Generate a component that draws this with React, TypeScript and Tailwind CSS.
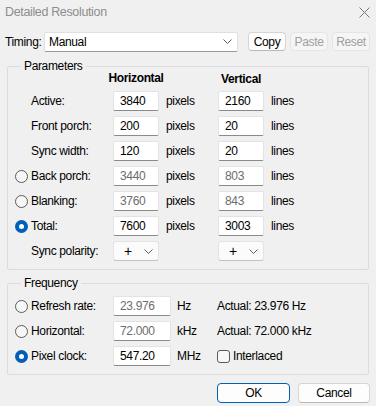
import React from 'react'

const font = { fontFamily: '"Liberation Sans", Arial, sans-serif' }

function Chevron() {
  return (
    <svg width="9" height="5" viewBox="0 0 9 5" className="shrink-0">
      <path d="M0.5 0.5 L4.5 4.5 L8.5 0.5" fill="none" stroke="#5f5f5f" strokeWidth="1" />
    </svg>
  )
}

function Radio({ checked }: { checked?: boolean }) {
  if (checked) {
    return (
      <span className="w-[13px] h-[13px] rounded-full bg-[#005fb8] flex items-center justify-center">
        <span className="w-[5px] h-[5px] rounded-full bg-white" />
      </span>
    )
  }
  return <span className="w-[13px] h-[13px] rounded-full border border-[#5b5b5b] bg-[#f7f7f7]" />
}

function Field({ value, disabled, w = 'w-[46px]' }: { value: string; disabled?: boolean; w?: string }) {
  return (
    <div
      className={`${w} h-[20px] bg-white border border-[#e3e3e3] border-b-[#8a8a8a] rounded-[2px] flex items-center pl-[6px] ${
        disabled ? 'text-[#6d6d6d]' : 'text-black'
      }`}
    >
      {value}
    </div>
  )
}

function Polarity() {
  return (
    <div className="w-[46px] h-[20px] bg-[#fbfbfb] border border-[#e3e3e3] border-b-[#c2c2c2] rounded-[3px] flex items-center justify-between pl-[10px] pr-[5px]">
      <span className="text-[14px] leading-none">+</span>
      <Chevron />
    </div>
  )
}

type Row = { label: string; radio?: 'on' | 'off'; h: string; v: string; dis?: boolean }

const rows: Row[] = [
  { label: 'Active:', h: '3840', v: '2160' },
  { label: 'Front porch:', h: '200', v: '20' },
  { label: 'Sync width:', h: '120', v: '20' },
  { label: 'Back porch:', radio: 'off', h: '3440', v: '803', dis: true },
  { label: 'Blanking:', radio: 'off', h: '3760', v: '843', dis: true },
  { label: 'Total:', radio: 'on', h: '7600', v: '3003' },
]

function Button({ label, disabled, primary, w }: { label: string; disabled?: boolean; primary?: boolean; w: string }) {
  return (
    <div
      className={`${w} flex items-center justify-center rounded-[4px] border ${
        disabled
          ? 'border-[#e5e5e5] bg-[#f5f5f5] text-[#a0a0a0]'
          : primary
            ? 'border-[#005fb8] bg-[#fdfdfd] text-black'
            : 'border-[#d5d5d5] border-b-[#b8b8b8] bg-[#fdfdfd] text-black'
      }`}
    >
      {label}
    </div>
  )
}

export default function App() {
  return (
    <div className="w-[376px] h-[406px] bg-[#f0f0f0] text-[12px] tracking-[-0.35px] text-black overflow-hidden" style={font}>
      {/* title bar */}
      <div className="h-[24px] flex items-center justify-between pl-[5px] pr-[6px]">
        <span className="text-[12.5px] text-[#8d8d8d]">Detailed Resolution</span>
        <svg width="11" height="11" viewBox="0 0 11 11">
          <path d="M0.5 0.5 L10.5 10.5 M10.5 0.5 L0.5 10.5" stroke="#7a7a7a" strokeWidth="1" />
        </svg>
      </div>

      {/* timing */}
      <div className="flex items-center h-[19px] mt-[8px] pl-[5px]">
        <span className="w-[39px]">Timing:</span>
        <div className="w-[194px] h-[20px] bg-white border border-[#e0e0e0] border-b-[#9a9a9a] rounded-[2px] flex items-center justify-between pl-[4px] pr-[5px]">
          <span>Manual</span>
          <Chevron />
        </div>
        <div className="flex h-[19px] gap-[4px] ml-[10px]">
          <Button label="Copy" w="w-[38px]" />
          <Button label="Paste" w="w-[38px]" disabled />
          <Button label="Reset" w="w-[38px]" disabled />
        </div>
      </div>

      {/* parameters */}
      <fieldset className="mx-[7px] mt-[7px] border border-[#dcdcdc] rounded-[2px] pl-[7px] pb-[8px]">
        <legend className="ml-[6px] px-[3px] leading-[16px]">Parameters</legend>
        <div className="grid grid-cols-[16px_82px_46px_59px_46px_1fr] items-center gap-y-[5px] -mt-[4px]">
          <span />
          <span />
          <span className="font-bold text-center whitespace-nowrap leading-[16px] -mx-[10px]">Horizontal</span>
          <span />
          <span className="font-bold text-center leading-[16px] -mb-[1px]">Vertical</span>
          <span />
          {rows.map(r => (
            <React.Fragment key={r.label}>
              <span className="flex items-center h-[20px]">{r.radio && <Radio checked={r.radio === 'on'} />}</span>
              <span>{r.label}</span>
              <Field value={r.h} disabled={r.dis} />
              <span className="pl-[7px]">pixels</span>
              <Field value={r.v} disabled={r.dis} />
              <span className="pl-[7px]">lines</span>
            </React.Fragment>
          ))}
          <span />
          <span>Sync polarity:</span>
          <Polarity />
          <span />
          <Polarity />
          <span />
        </div>
      </fieldset>

      {/* frequency */}
      <fieldset className="mx-[7px] mt-[5px] border border-[#dcdcdc] rounded-[2px] pl-[7px] pt-[5px] pb-[8px]">
        <legend className="ml-[6px] px-[3px] leading-[16px]">Frequency</legend>
        <div className="grid grid-cols-[16px_82px_58px_46px_1fr] items-center gap-y-[5px]">
          <span className="flex items-center h-[20px]"><Radio /></span>
          <span>Refresh rate:</span>
          <Field value="23.976" disabled w="w-[58px]" />
          <span className="pl-[6px]">Hz</span>
          <span>Actual: 23.976 Hz</span>

          <span className="flex items-center h-[20px]"><Radio /></span>
          <span>Horizontal:</span>
          <Field value="72.000" disabled w="w-[58px]" />
          <span className="pl-[6px]">kHz</span>
          <span>Actual: 72.000 kHz</span>

          <span className="flex items-center h-[20px]"><Radio checked /></span>
          <span>Pixel clock:</span>
          <Field value="547.20" w="w-[58px]" />
          <span className="pl-[6px]">MHz</span>
          <span className="flex items-center gap-[3px]">
            <span className="w-[13px] h-[13px] rounded-[3px] border border-[#5b5b5b] bg-[#f7f7f7]" />
            Interlaced
          </span>
        </div>
      </fieldset>

      {/* buttons */}
      <div className="flex justify-end gap-[8px] mt-[8px] pr-[6px] h-[20px]">
        <Button label="OK" primary w="w-[73px]" />
        <Button label="Cancel" w="w-[72px]" />
      </div>
    </div>
  )
}
